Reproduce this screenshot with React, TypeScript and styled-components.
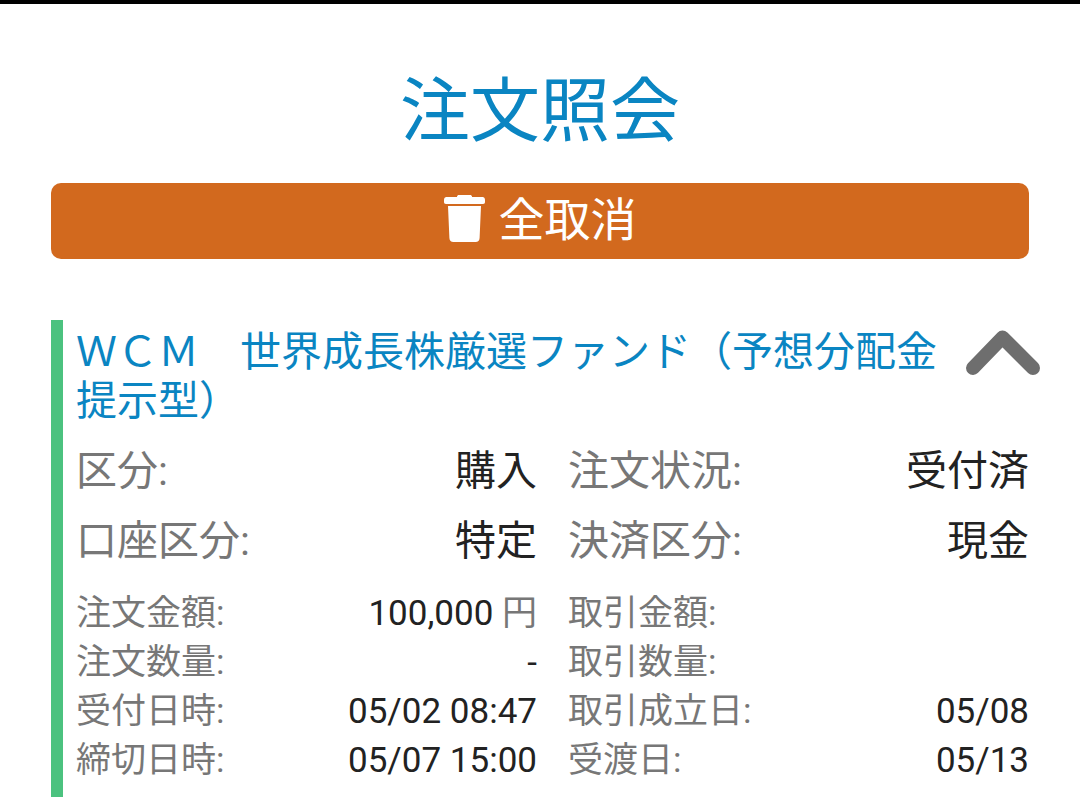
import * as React from 'react';
import styled, { createGlobalStyle } from 'styled-components';

const GlobalStyle = createGlobalStyle`
    html, body {
        margin: 0;
        padding: 0;
        background: #fff;
        overflow: hidden;
    }
    body {
        font-family: Roboto, "Noto Sans CJK JP", sans-serif;
    }
`;

const Page = styled.div`
    width: 1080px;
    height: 797px;
    overflow: hidden;
    border-top: 4px solid #000;
    box-sizing: border-box;
    display: flex;
    flex-direction: column;
`;

const Title = styled.h1`
    margin: 0;
    padding-top: 63px;
    height: 179px;
    flex: none;
    box-sizing: border-box;
    text-align: center;
    font-size: 70px;
    line-height: 90px;
    font-weight: 400;
    color: #0a85c2;
`;

const CancelButton = styled.button`
    margin: 0 51px;
    height: 76px;
    flex: none;
    padding: 0 0 6px;
    border: none;
    border-radius: 10px;
    background: #d2691e;
    color: #fff;
    font-family: inherit;
    font-size: 46px;
    display: flex;
    align-items: center;
    justify-content: center;
    gap: 14px;
`;

const CancelText = styled.span`
    margin-bottom: 4px;
`;

const Card = styled.section`
    margin: 61px 0 0 51px;
    flex: 1;
    border-left: 12px solid #4bc27f;
    padding: 8px 39px 0 13px;
`;

const Header = styled.div`
    display: flex;
    align-items: flex-start;
    gap: 20px;
`;

const FundName = styled.div`
    flex: 1;
    font-size: 41px;
    line-height: 49px;
    color: #0a85c2;
`;

const Toggle = styled.svg`
    flex: none;
`;

const Rows = styled.div`
    width: 953px;
    display: grid;
    grid-template-columns: 461px 461px;
    column-gap: 31px;
`;

const MainRows = styled(Rows)`
    margin-top: 20px;
    row-gap: 20px;
`;

const SubRows = styled(Rows)`
    margin-top: 23px;
`;

const Field = styled.div<{ $small?: boolean }>`
    display: flex;
    justify-content: space-between;
    font-size: ${p => (p.$small ? 35 : 41)}px;
    line-height: ${p => (p.$small ? 49 : 50)}px;
    white-space: nowrap;
`;

const Label = styled.span`
    color: #777;
`;

const Value = styled.span`
    color: #222;
`;

const Unit = styled.span`
    color: #777;
`;

const TrashIcon = () => (
    <svg width="41" height="47" viewBox="0 0 41 47" fill="#fff">
        <path d="M13 1.500C13 .6 14 0 15 0h11c1 0 2 .6 2 1.500V2h10.500C40 2 41 3 41 5v2c0 1-.6 2-2 2H2C.6 9 0 8 0 7V5c0-2 1-3 2.500-3H13z" />
        <path d="M4 11h33l-1.400 32c-.1 2.400-1.600 4-4 4H9.400c-2.400 0-3.900-1.600-4-4z" />
    </svg>
);

const main = [
    ['区分:', '購入'],
    ['注文状況:', '受付済'],
    ['口座区分:', '特定'],
    ['決済区分:', '現金'],
];

const sub: [string, React.ReactNode][] = [
    ['注文金額:', <>100,000 <Unit>円</Unit></>],
    ['取引金額:', ''],
    ['注文数量:', '-'],
    ['取引数量:', ''],
    ['受付日時:', '05/02 08:47'],
    ['取引成立日:', '05/08'],
    ['締切日時:', '05/07 15:00'],
    ['受渡日:', '05/13'],
];

export default function App() {
    return (
        <Page>
            <GlobalStyle />
            <Title>注文照会</Title>
            <CancelButton>
                <TrashIcon />
                <CancelText>全取消</CancelText>
            </CancelButton>
            <Card>
                <Header>
                    <FundName>ＷＣＭ　世界成長株厳選ファンド（予想分配金提示型）</FundName>
                    <Toggle width="76" height="48" viewBox="0 0 76 48">
                        <path
                            d="M8 40L37.500 9.500L68 40"
                            fill="none"
                            stroke="#6e6e6e"
                            strokeWidth="14"
                            strokeLinecap="round"
                            strokeLinejoin="round"
                        />
                    </Toggle>
                </Header>
                <MainRows>
                    {main.map(([label, value]) => (
                        <Field key={label}>
                            <Label>{label}</Label>
                            <Value>{value}</Value>
                        </Field>
                    ))}
                </MainRows>
                <SubRows>
                    {sub.map(([label, value]) => (
                        <Field $small key={label}>
                            <Label>{label}</Label>
                            <Value>{value}</Value>
                        </Field>
                    ))}
                </SubRows>
            </Card>
        </Page>
    );
}
